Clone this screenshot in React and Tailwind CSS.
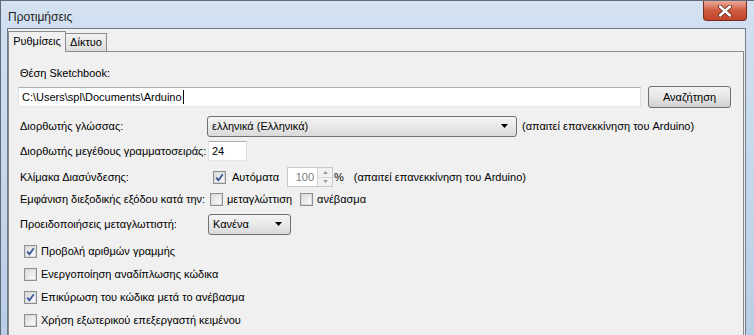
import React from 'react';

const font = { fontFamily: '"Liberation Sans", Arial, sans-serif' };

function Check({ checked }) {
  return (
    <span className="relative inline-flex h-[13px] w-[13px] shrink-0 items-center justify-center border border-[#8f8f8f] bg-white">
      <span className="flex h-[11px] w-[11px] items-center justify-center border border-[#d9dadb] bg-gradient-to-br from-[#dcdcdc] to-[#fbfbfb]">
        {checked && (
          <svg width="9" height="9" viewBox="0 0 9 9">
            <path d="M1.2 4.6 L3.4 7.2 L7.8 1.2" fill="none" stroke="#3a559a" strokeWidth="1.8" />
          </svg>
        )}
      </span>
    </span>
  );
}

function Arrow() {
  return (
    <svg width="7" height="4" viewBox="0 0 7 4">
      <path d="M0 0 L7 0 L3.5 4 Z" fill="#000" />
    </svg>
  );
}

function Combo({ text, width }) {
  return (
    <div
      className={`flex h-[21px] ${width} items-center justify-between rounded-[3px] border border-[#707070] bg-gradient-to-b from-[#f3f3f3] via-[#e9e9e9] to-[#d9d9d9] pl-[4px] pr-[8px]`}
    >
      <span>{text}</span>
      <Arrow />
    </div>
  );
}

export default function App() {
  return (
    <div
      style={font}
      className="flex h-[335px] w-[754px] flex-col overflow-hidden whitespace-nowrap border-l border-t border-[#5d6b7a] bg-gradient-to-b from-[#d3e1f1] via-[#c6d8ec] to-[#b9cde6] text-[11px] text-black"
    >
      {/* title bar */}
      <div className="flex h-[27px] shrink-0 items-start">
        <span className="mt-[7px] pl-[7px] text-[12px] text-[#1e1e1e]">Προτιμήσεις</span>
        <div className="ml-auto mr-[7px] flex h-[20px] w-[44px] items-center justify-center rounded-b-[4px] border border-t-0 border-[#7c2b1f] bg-gradient-to-b from-[#e9a99a] via-[#cf5a40] to-[#c0442c]">
          <svg width="14" height="12" viewBox="0 0 14 12">
            <path d="M2 1.5 L12 10.5 M12 1.5 L2 10.5" stroke="#5b2318" strokeWidth="4" strokeLinecap="round" />
            <path d="M2 1.5 L12 10.5 M12 1.5 L2 10.5" stroke="#ffffff" strokeWidth="2.4" strokeLinecap="round" />
          </svg>
        </div>
      </div>

      <div className="flex flex-1">
        <div className="w-[6px] shrink-0" />
        {/* client area */}
        <div className="flex w-[739px] flex-col border border-b-0 border-[#6f7b88] bg-[#f0f0f0] pt-[2px]">
          {/* tabs */}
          <div className="relative z-10 flex items-end">
            <div className="flex h-[21px] w-[58px] items-center justify-center border border-b-0 border-[#898c95] bg-[#f0f0f0] pb-[1px]">
              Ρυθμίσεις
            </div>
            <div className="mb-[1px] flex h-[18px] w-[41px] items-center justify-center border border-b-0 border-l-0 border-[#898c95] bg-gradient-to-b from-[#f2f2f2] to-[#dcdcdc]">
              Δίκτυο
            </div>
          </div>

          {/* panel */}
          <div className="-mt-[1px] mr-[1px] flex flex-1 flex-col border border-b-0 border-[#898c95] pl-[9px] pt-[13px]">
            <div className="flex h-[16px] items-center pl-[2px]">Θέση Sketchbook:</div>

            <div className="mt-[5px] flex h-[22px] items-center">
              <div className="flex h-[20px] w-[623px] items-center border border-[#abadb3] border-b-[#e3e9ef] border-l-[#e2e3ea] border-r-[#dbdfe6] bg-white pl-[3px]">
                <span>C:\Users\spl\Documents\Arduino</span>
                <span className="ml-[1px] h-[14px] w-[1px] bg-black" />
              </div>
              <div className="ml-[7px] flex h-[22px] w-[83px] items-center justify-center rounded-[3px] border border-[#707070] bg-gradient-to-b from-[#f2f2f2] via-[#e6e6e6] to-[#d0d0d0]">
                Αναζήτηση
              </div>
            </div>

            <div className="mt-[7px] flex h-[22px] items-center">
              <span className="w-[189px] pl-[2px]">Διορθωτής γλώσσας:</span>
              <Combo text="ελληνικά (Ελληνικά)" width="w-[310px]" />
              <span className="ml-[5px]">(απαιτεί επανεκκίνηση του Arduino)</span>
            </div>

            <div className="mt-[3px] flex h-[22px] items-center">
              <span className="w-[190px] pl-[2px]">Διορθωτής μεγέθους γραμματοσειράς:</span>
              <div className="flex h-[20px] w-[39px] items-center border border-[#abadb3] border-b-[#e3e9ef] border-l-[#e2e3ea] border-r-[#dbdfe6] bg-white pl-[3px]">
                24
              </div>
            </div>

            <div className="mt-[4px] flex h-[22px] items-center">
              <span className="w-[195px] pl-[2px]">Κλίμακα Διασύνδεσης:</span>
              <Check checked />
              <span className="ml-[6px]">Αυτόματα</span>
              <div className="ml-[8px] flex h-[20px] w-[46px] items-stretch border border-[#c8c9ca] bg-white">
                <span className="flex flex-1 items-center justify-end pr-[3px] text-[#7a7a7a]">100</span>
                <div className="flex w-[15px] flex-col border-l border-[#d6d6d6] bg-[#f2f2f2]">
                  <div className="flex flex-1 items-center justify-center border-b border-[#d6d6d6]">
                    <svg width="5" height="3" viewBox="0 0 5 3"><path d="M0 3 L5 3 L2.5 0 Z" fill="#a0a0a0" /></svg>
                  </div>
                  <div className="flex flex-1 items-center justify-center">
                    <svg width="5" height="3" viewBox="0 0 5 3"><path d="M0 0 L5 0 L2.5 3 Z" fill="#a0a0a0" /></svg>
                  </div>
                </div>
              </div>
              <span className="ml-[1px]">%</span>
              <span className="ml-[10px]">(απαιτεί επανεκκίνηση του Arduino)</span>
            </div>

            <div className="flex h-[22px] items-center">
              <span className="w-[192px] pl-[2px]">Εμφάνιση διεξοδικής εξόδου κατά την:</span>
              <Check />
              <span className="ml-[4px]">μεταγλώττιση</span>
              <span className="ml-[8px]" />
              <Check />
              <span className="ml-[4px]">ανέβασμα</span>
            </div>

            <div className="mt-[3px] flex h-[22px] items-center">
              <span className="w-[190px] pl-[2px]">Προειδοποιήσεις μεταγλωττιστή:</span>
              <Combo text="Κανένα" width="w-[83px]" />
            </div>

            <div className="mt-[5px] flex flex-col pl-[6px]">
              {[
                ['Προβολή αριθμών γραμμής', true],
                ['Ενεργοποίηση αναδίπλωσης κώδικα', false],
                ['Επικύρωση του κώδικα μετά το ανέβασμα', true],
                ['Χρήση εξωτερικού επεξεργαστή κειμένου', false],
              ].map(([label, on]) => (
                <div key={label} className="flex h-[23px] items-center">
                  <Check checked={on} />
                  <span className="ml-[4px]">{label}</span>
                </div>
              ))}
            </div>
          </div>
        </div>
        <div className="flex-1" />
      </div>
    </div>
  );
}
